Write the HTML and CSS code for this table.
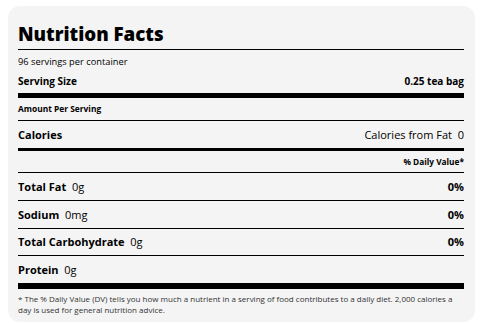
FILE: index.html
```html
<!DOCTYPE html>
<html lang="en">
<head>
<meta charset="utf-8">
<title>Nutrition Facts</title>
<link rel="stylesheet" href="styles.css">
</head>
<body>
<section class="label">
  <h1 class="title">Nutrition Facts</h1>
  <div class="servings">96 servings per container</div>
  <div class="row serving-size">
    <span class="b">Serving Size</span>
    <span class="b">0.25 tea bag</span>
  </div>
  <div class="amount">Amount Per Serving</div>
  <div class="row calories">
    <span class="b">Calories</span>
    <span class="fat">Calories from Fat&nbsp; 0</span>
  </div>
  <div class="dv">% Daily Value*</div>
  <div class="row nutrient line">
    <span><span class="b">Total Fat</span>&nbsp; 0g</span>
    <span class="b">0%</span>
  </div>
  <div class="row nutrient line">
    <span><span class="b">Sodium</span>&nbsp; 0mg</span>
    <span class="b">0%</span>
  </div>
  <div class="row nutrient line short">
    <span><span class="b">Total Carbohydrate</span>&nbsp; 0g</span>
    <span class="b">0%</span>
  </div>
  <div class="row nutrient thick">
    <span><span class="b">Protein</span>&nbsp; 0g</span>
  </div>
  <p class="footnote">* The % Daily Value (DV) tells you how much a nutrient in a serving of food contributes to a daily diet. 2,000 calories a day is used for general nutrition advice.</p>
</section>
</body>
</html>
```

FILE: styles.css
```css
html, body {
  background: #ffffff;
}
body {
  margin: 6px 7px 0 8px;
  font-family: "Open Sans", "DejaVu Sans", sans-serif;
  color: #000;
}
.label {
  background: #f4f4f4;
  border-radius: 12px;
  padding: 16px 11px 7px 10px;
}
.title {
  margin: 0;
  font-size: 18.7px;
  font-weight: 800;
  line-height: 24px;
  padding-bottom: 3px;
  border-bottom: 1px solid #000;
  letter-spacing: 0;
}
.servings {
  font-size: 9.3px;
  line-height: 15px;
  padding: 4px 0 1px;
}
.row {
  display: flex;
  justify-content: space-between;
  align-items: center;
}
.b {
  font-weight: 700;
}
.serving-size {
  font-size: 10px;
  line-height: 15px;
  padding: 4px 0;
  border-bottom: 5px solid #000;
}
.amount {
  font-size: 8.4px;
  font-weight: 700;
  line-height: 12px;
  padding: 5px 0;
  border-bottom: 1px solid #000;
}
.calories {
  font-size: 11px;
  line-height: 15px;
  padding: 6px 0;
  border-bottom: 3px solid #000;
}
.fat {
  font-weight: 400;
}
.dv {
  font-size: 8.3px;
  font-weight: 700;
  text-align: right;
  line-height: 11px;
  padding: 5px 0;
  border-bottom: 1px solid #000;
}
.nutrient {
  font-size: 11px;
  line-height: 15px;
  padding: 6px 0;
}
.line {
  border-bottom: 1px solid #000;
}
.short {
  padding: 5px 0 6px;
}
.thick {
  border-bottom: 6px solid #000;
}
.footnote {
  margin: 0;
  padding-top: 4px;
  font-size: 8px;
  line-height: 11px;
  color: #333;
}
```
